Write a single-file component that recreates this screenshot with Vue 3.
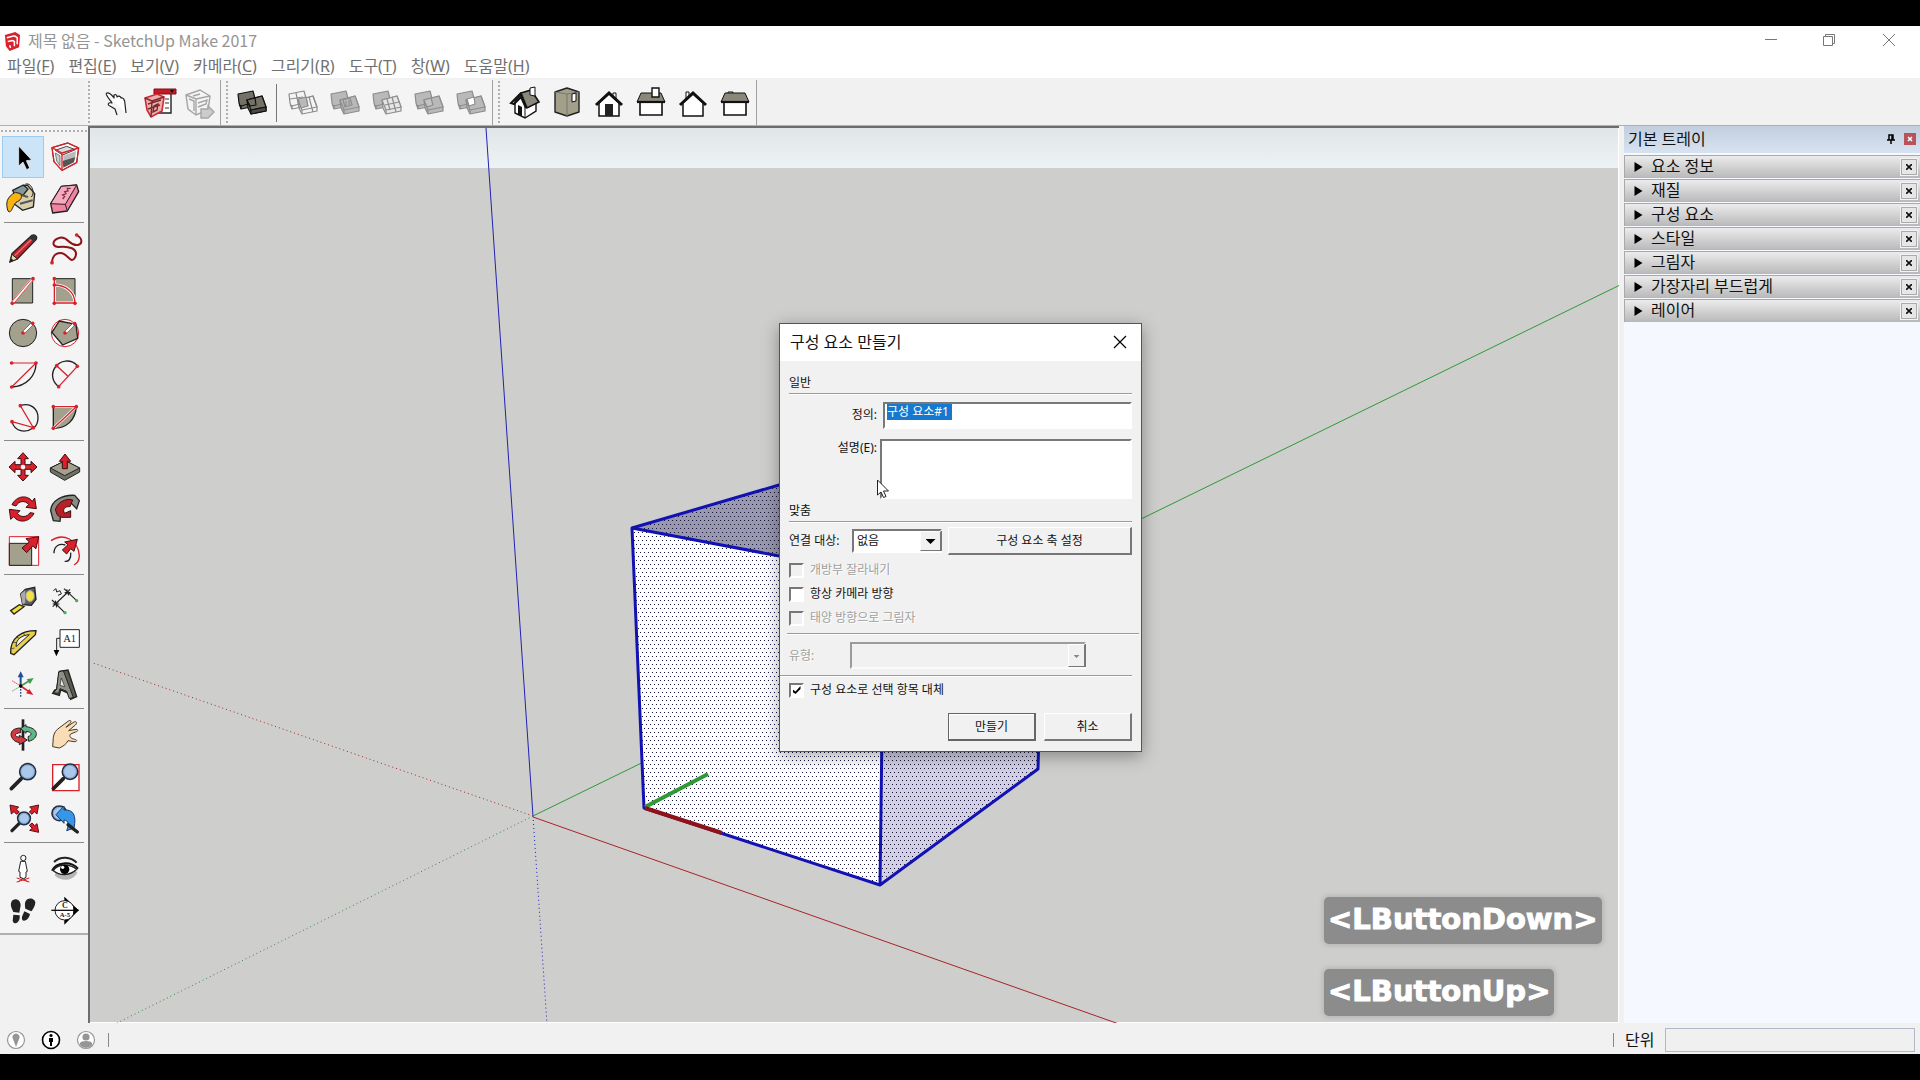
<script setup>
import { ref } from 'vue'

const menus = [
  ['파일', 'F'], ['편집', 'E'], ['보기', 'V'], ['카메라', 'C'],
  ['그리기', 'R'], ['도구', 'T'], ['창', 'W'], ['도움말', 'H'],
]

const panels = ['요소 정보', '재질', '구성 요소', '스타일', '그림자', '가장자리 부드럽게', '레이어']

const definition = ref('구성 요소#1')
const description = ref('')

const solid = (back, front, extra, stroke) => `
  <g stroke="${stroke}" stroke-width="1.2" stroke-linejoin="round">
    <path d="M0 3 15 0 18 11 18 15 3 18 1 12Z" fill="${back}"/>
    <path d="M1 14 3 15 18 11M3 14V18" fill="none"/>
    <path d="M9 9 24 5 28 16 28 20 13 23 10 17Z" fill="${front}"/>
    <path d="M9 9 24 5 28 16 13 19Z" fill="${front}"/>
    <path d="M13 19V23" fill="none"/>${extra}
  </g>`

const G = '#b9b9b9'
const S = '#8d8d8d'

const toolbars = [
  [
    { name: '상호 작용', art: '<path d="M2 3C4 0 8 4 10 7L10 4C12 3 13 4 13 6 15 4 17 6 17 7 19 6 21 9 21 13L22 22M2 3C4 7 6 9 8 12 4 11 3 14 6 15L11 18 13 24" fill="#fff" stroke="#222" stroke-width="1.2" stroke-linejoin="round"/>' },
    { name: '구성 요소 옵션', art: '<path d="M12 2H26V22H12Z" fill="#fff" stroke="#222" stroke-width="1.4"/><path d="M9-2H31V3H9Z" fill="#c41c26" stroke="#7d1018"/><path d="M25-1 29-1 27 2Z" fill="#111"/><path d="M20 8H24M20 12H24M20 17H24" stroke="#333"/><path d="M0 7 12 3 19 6 17 20 6 26 2 19Z" fill="#eab0b0" stroke="#cf2832" stroke-width="1.6"/><path d="M0 7 7 10 6 26M7 10 19 6M3 13 16 9M3 18 15 14M9 15 13 13 12 19 8 21Z" fill="none" stroke="#7c2a2c" stroke-width="1.4"/>' },
    { name: '구성 요소 특성', art: '<g fill="none" stroke="#a5a5a5" stroke-width="1.4"><path d="M0 4 14 -1 24 5 22 19 10 24 2 18Z"/><path d="M0 4 10 8 24 5M10 8V24M3 8 8 10 8 20M12 12 21 9 20 13 12 16M14 3 7 5"/><path d="M15 18H22V15L28 21 22 27H15Z" fill="#ccc"/></g>' },
  ],
  [
    { name: '외부 쉘', art: solid('#747267', '#747267', '<path d="M9 9 17 7 18 14 12 15Z" fill="#747267"/><path d="M13 19 28 16V20L13 23Z" fill="#4c4b44"/>', '#111') },
    { divider: true },
    { name: '교차', art: solid('none', 'none', `<path d="M9 8 17 6 19 15 12 17Z" fill="${G}"/><path d="M7 2 10 16M20 6 24 21M1 8 14 6" fill="none"/>`, S) },
    { name: '결합', art: solid(G, G, '<path d="M12 9 19 7 21 14 14 16ZM15 10V15M18 9V14" fill="none"/>', S) },
    { name: '빼기', art: solid(G, '#e6e6e6', '<path d="M14 8 17 19M19 6 23 21M12 14 26 11" fill="none"/>', S) },
    { name: '자르기', art: solid(G, G, '<path d="M9 9 16 7 18 14 12 16Z" fill="#c4c4c4"/>', S) },
    { name: '분할', art: solid(G, G, '<path d="M10 8 17 6 18 13 12 15Z" fill="#fff"/>', S) },
  ],
  [
    { name: '등각 투영', art: '<path d="M4 10V22L14 27 25 20V13L10 4Z" fill="#fff" stroke="#111" stroke-width="1.4"/><path d="M14 16V27" stroke="#111"/><path d="M7 14 11 16V25L7 23Z" fill="#111"/><path d="M10 2 20-1 28 11 16 17Z" fill="#8a887a" stroke="#111" stroke-width="1.6"/><path d="M10 2 0 12 3 13 10 6 15 17" fill="none" stroke="#111" stroke-width="2"/><path d="M19-3 24-4 24 5 19 4Z" fill="#fff" stroke="#111"/>' },
    { name: '상단', art: '<path d="M2 1 14-3 26 1V21L14 25 2 21Z" fill="#a3a08a" stroke="#222" stroke-width="1.4" stroke-linejoin="round"/><path d="M14 3V25M2 1 14 3 26 1" stroke="#777" fill="none"/><path d="M19 3 23 2V10L19 11Z" fill="#fff" stroke="#111"/>' },
    { name: '정면', art: '<path d="M18 2H21V9H18Z" fill="#fff" stroke="#111"/><path d="M4 12V25H24V12L14 3Z" fill="#fff" stroke="#111" stroke-width="1.5"/><path d="M10 13H18V25H10Z" fill="#222"/><path d="M1 14 14 2 27 14" fill="none" stroke="#111" stroke-width="3"/>' },
    { name: '오른쪽', art: '<path d="M3 11H25V24H3Z" fill="#fff" stroke="#111" stroke-width="1.6"/><path d="M4 2H24L28 11H0Z" fill="#8a887a" stroke="#111"/><path d="M0 11H28" stroke="#111" stroke-width="2.2"/><path d="M15-3H22V6H15Z" fill="#fff" stroke="#111" stroke-width="1.4"/>' },
    { name: '후면', art: '<path d="M7 1H10V9H7Z" fill="#fff" stroke="#111"/><path d="M4 12V25H24V12L14 3Z" fill="#fff" stroke="#111" stroke-width="1.5"/><path d="M1 14 14 2 27 14" fill="none" stroke="#111" stroke-width="3"/>' },
    { name: '왼쪽', art: '<path d="M7 1H12V3H7Z" fill="#fff" stroke="#111"/><path d="M3 11H25V24H3Z" fill="#fff" stroke="#111" stroke-width="1.6"/><path d="M4 2H24L28 11H0Z" fill="#8a887a" stroke="#111"/><path d="M0 11H28" stroke="#111" stroke-width="2.2"/>' },
  ],
]

const R = '#d9202b'
const F = '#a3a18e'
const dots = (...p) => p.map(([x, y]) => `<circle cx="${x}" cy="${y}" r="5.5" fill="${R}"/>`).join('')
const lens = (x, y, r) => `<circle cx="${x}" cy="${y}" r="${r}" fill="#a9c8ea" stroke="#222e42" stroke-width="5"/><circle cx="${x}" cy="${y}" r="${r - 4}" fill="none" stroke="#6f93c6" stroke-width="2"/>`

const toolGroups = [
  [
    { name: '선택', box: '6 33', active: true, art: '<path d="M56 63V123L69 111 80 134 89 129 79 107 95 105Z" fill="#000" stroke="#fff" stroke-width="2"/>' },
    { name: '구성 요소 만들기', box: '132 33', art: `<path d="M156 68 203 54 236 69 230 113 186 136 162 110Z" fill="#fff" stroke="#222" stroke-width="3"/><path d="M166 76 200 64 226 74 188 90Z" fill="#ddd" stroke="#444" stroke-width="3"/><path d="M190 92 228 78 226 96 190 110Z" fill="#bbb"/><path d="M188 108 226 96 222 112 190 128Z" fill="#555"/><path d="M166 84 180 92 180 122 170 108Z" fill="#ccc" stroke="#444" stroke-width="2"/><path d="M156 68 203 54 236 69 230 113 186 136 162 110ZM156 68 186 84 236 69M186 84V136" fill="none" stroke="${R}" stroke-width="4"/>` },
    { name: '페인트통', box: '6 159', art: '<path d="M52 190 82 180 104 206 100 246 68 256 42 236Z" fill="#d7cfac" stroke="#222" stroke-width="4"/><path d="M38 196 70 180 84 192 70 210 46 214Z" fill="#829999" stroke="#222" stroke-width="4"/><path d="M50 206 84 216M60 236 98 226" stroke="#555" stroke-width="6"/><path d="M46 202C20 216 16 234 24 258 34 268 36 246 48 232 62 226 68 218 62 206Z" fill="#f9b30f" stroke="#222" stroke-width="3"/><path d="M70 184C86 160 110 200 94 216" fill="none" stroke="#222" stroke-width="3"/>' },
    { name: '지우개', box: '132 159', art: '<path d="M152 236 184 184 230 180 236 200 202 258 158 264Z" fill="#f2829f" stroke="#222" stroke-width="4" stroke-linejoin="round"/><path d="M152 236 196 238 230 180 184 184Z" fill="#f9a9bd" stroke="#222" stroke-width="3"/><path d="M196 238 202 258" stroke="#222" stroke-width="3"/><path d="M188 222 194 214 188 210 198 206 194 200 204 198 202 190 212 190" fill="none" stroke="#7d3448" stroke-width="4"/>' },
  ],
  [
    { name: '선', box: '6 309', art: '<path d="M30 411 36 386 94 332C104 326 114 334 108 344L52 402Z" fill="#c3242c" stroke="#222" stroke-width="4"/><path d="M44 392 98 340" stroke="#ef6b6b" stroke-width="4"/><path d="M88 338 102 352 109 344C112 334 104 328 96 331Z" fill="#333"/><path d="M30 411 36 388 52 402Z" fill="#e9d8a6" stroke="#222" stroke-width="3"/><path d="M29 412 33 400 41 406Z" fill="#222"/>' },
    { name: '자유형', box: '132 309', art: `<path d="M230 330C248 340 248 356 234 360 206 364 206 334 180 338 156 344 154 364 174 366 206 362 236 370 226 396 212 422 204 384 182 384 164 384 158 394 156 412" fill="none" stroke="#8e1219" stroke-width="6"/>${dots([230, 330], [156, 413])}` },
    { name: '직사각형', box: '6 435', art: `<path d="M37 461H98V534H37Z" fill="${F}" stroke="#222" stroke-width="3"/><path d="M37 534 98 461" stroke="#fff" stroke-width="9"/><path d="M34 532 96 460M41 536 101 463" stroke="${R}" stroke-width="2.4"/>${dots([37, 535], [99, 461])}` },
    { name: '회전된 직사각형', box: '132 435', art: `<path d="M163 461H225V534H163Z" fill="${F}" stroke="#222" stroke-width="3"/><path d="M163 461V534H225C224 500 196 480 163 480" fill="none" stroke="#fff" stroke-width="9"/><path d="M163 461V534H225C224 500 196 480 163 480" fill="none" stroke="${R}" stroke-width="4"/>${dots([163, 461], [163, 480], [163, 535], [225, 535])}` },
    { name: '원', box: '6 561', art: `<circle cx="69" cy="624" r="41" fill="${F}" stroke="#222" stroke-width="3"/><path d="M69 624 98 595" stroke="#fff" stroke-width="9"/><path d="M66 621 95 592M72 627 101 598" stroke="${R}" stroke-width="2.4"/>${dots([69, 624], [98, 595])}` },
    { name: '다각형', box: '132 561', art: `<circle cx="195" cy="624" r="41" fill="#fff" stroke="${R}" stroke-width="3"/><path d="M156 622 178 588 228 598 233 640 188 660Z" fill="${F}" stroke="#222" stroke-width="4"/><path d="M195 624 224 595" stroke="#fff" stroke-width="9"/><path d="M192 621 221 592M198 627 227 598" stroke="${R}" stroke-width="2.4"/>${dots([195, 624], [224, 596])}` },
    { name: '호', box: '6 687', art: `<path d="M108 714C108 752 80 784 35 786" fill="none" stroke="#222" stroke-width="4"/><path d="M35 714H108L35 786" fill="none" stroke="${R}" stroke-width="3.5"/>${dots([35, 714], [108, 714], [35, 786])}` },
    { name: '2점 호', box: '132 687', art: `<path d="M232 722C212 700 180 706 166 726 152 746 156 770 176 785" fill="none" stroke="#222" stroke-width="4"/><path d="M232 724 176 785M170 722 203 753" fill="none" stroke="${R}" stroke-width="4"/>${dots([232, 724], [176, 785], [170, 722])}` },
    { name: '3점 호', box: '6 813', art: `<path d="M61 842C90 832 114 850 114 878 114 896 108 904 100 908 76 926 44 920 36 890" fill="none" stroke="#222" stroke-width="4"/><path d="M61 842 100 908 36 890" fill="none" stroke="${R}" stroke-width="3.5"/>${dots([61, 842], [100, 908], [36, 890])}` },
    { name: '파이', box: '132 813', art: `<path d="M160 845H229C226 886 200 910 160 910Z" fill="${F}" stroke="#222" stroke-width="4"/><path d="M160 845H229L160 910" fill="none" stroke="#fff" stroke-width="8"/><path d="M160 845H229L160 910" fill="none" stroke="${R}" stroke-width="4"/>${dots([160, 845], [229, 845], [160, 910])}` },
  ],
  [
    { name: '이동', box: '6 48', art: `<path d="M69 68 85 86H75V104H93V94L111 111 93 128V118H75V136H85L69 153 53 136H63V118H45V128L27 111 45 94V104H63V86H53Z" fill="${R}" stroke="#3a1012" stroke-width="3"/><circle cx="69" cy="111" r="7" fill="#f3f3f3"/>` },
    { name: '밀기/끌기', box: '132 48', art: `<path d="M151 114 196 92 239 114V126L194 151 151 126Z" fill="#6f7365" stroke="#222" stroke-width="3"/><path d="M151 114 196 92 239 114 194 137Z" fill="${F}" stroke="#222" stroke-width="3"/><path d="M195 72 212 94H202V116H187V94H178Z" fill="${R}" stroke="#3a1012" stroke-width="3"/>` },
    { name: '회전', box: '6 174', art: `<path d="M36 224C50 196 82 194 97 214L104 204 109 236 78 232 86 224C76 210 56 212 48 228Z" fill="${R}" stroke="#3a1012" stroke-width="3"/><path d="M102 250C88 278 56 280 41 260L32 268 28 238 60 242 52 250C62 264 82 262 90 248Z" fill="${R}" stroke="#3a1012" stroke-width="3"/>` },
    { name: '따라가기', box: '132 174', art: `<path d="M152 242C154 212 186 194 224 196L238 212 230 236 214 220C196 220 178 236 182 254L180 274 160 272Z" fill="#8b8d84" stroke="#222" stroke-width="4"/><path d="M166 240C172 218 190 210 206 208L218 210 210 230C194 228 186 240 194 250L212 242 212 262 184 262C168 258 170 246 166 240Z" fill="#b82028" stroke="#3a1012" stroke-width="3"/>` },
    { name: '배율', box: '6 300', art: `<path d="M28 320H116V406H28Z" fill="#fff" stroke="${R}" stroke-width="3"/><path d="M28 340H95V406H28Z" fill="${F}" stroke="#222" stroke-width="3"/><path d="M116 320 108 356 98 348 80 368 66 354 88 336 78 326Z" fill="${R}" stroke="#3a1012" stroke-width="3"/>` },
    { name: '오프셋', box: '132 300', art: `<path d="M153 332C190 306 234 330 238 376 238 390 232 400 222 405" fill="none" stroke="${R}" stroke-width="4"/><path d="M162 370C162 346 180 340 196 345M212 368C214 386 206 396 194 394" fill="none" stroke="#222" stroke-width="4"/><path d="M232 328 222 364 212 356 200 372 187 360 204 344 194 336Z" fill="${R}" stroke="#3a1012" stroke-width="3"/>` },
  ],
  [
    { name: '줄자 도구', box: '6 450', art: '<path d="M32 542 58 524 72 530 42 552Z" fill="#f4df34" stroke="#222" stroke-width="4"/><path d="M62 492 76 478 104 472 108 508 94 526 68 524Z" fill="#5d5d5d" stroke="#222" stroke-width="4"/><path d="M62 492 76 480V518L68 524Z" fill="#aaa"/><ellipse cx="90" cy="498" rx="12" ry="16" fill="#f4e043" stroke="#bbb" stroke-width="3"/>' },
    { name: '치수', box: '132 450', art: '<path d="M166 522 204 486M192 476 230 512M156 510 194 548M196 494 210 478M158 530 176 514M200 478 206 496M166 512 170 532M194 488H212M158 522H178" stroke="#222" stroke-width="3.5"/><circle cx="230" cy="512" r="5" fill="#4bad55"/><circle cx="195" cy="548" r="5" fill="#4bad55"/><path d="M160 482 168 476 170 486 180 482 184 492 174 496" fill="none" stroke="#222" stroke-width="3"/>' },
    { name: '각도기', box: '6 576', art: '<path d="M32 670C30 622 66 602 108 602L106 614 42 674Z" fill="#e6d14e" stroke="#222" stroke-width="4"/><path d="M48 650C48 626 66 616 88 614Z" fill="#f3f3f3" stroke="#222" stroke-width="3"/><path d="M34 656 44 654M38 636 48 638M50 620 58 626M70 608 74 616" stroke="#222" stroke-width="2"/>' },
    { name: '텍스트', box: '132 576', art: '<path d="M180 599H238V652H180Z" fill="#fff" stroke="#222" stroke-width="3"/><path d="M180 625H170V664" fill="none" stroke="#222" stroke-width="3"/><path d="M161 660H178L169 679Z"/><text x="209" y="635" text-anchor="middle" font-family="Liberation Serif, serif" font-size="32" fill="#222">A1</text>' },
    { name: '축', box: '6 702', art: `<path d="M62 768V736" stroke="#234f94" stroke-width="6"/><path d="M62 724 71 742H53Z" fill="#234f94"/><path d="M62 768 86 754" stroke="#3d9a47" stroke-width="5"/><path d="M101 744 90 762 80 748Z" fill="#3d9a47"/><path d="M62 768 86 784" stroke="${R}" stroke-width="5"/><path d="M100 795 78 790 88 777Z" fill="${R}"/><path d="M62 768V802" stroke="#234f94" stroke-width="4" stroke-dasharray="5 4"/><path d="M62 768 36 752" stroke="${R}" stroke-width="3" stroke-dasharray="4 3"/><path d="M62 768 36 784" stroke="#3d9a47" stroke-width="3" stroke-dasharray="4 3"/><circle cx="62" cy="768" r="5"/>` },
    { name: '3D 텍스트', box: '132 702', art: '<path d="M178 724 204 720 230 800 212 808 206 790 182 780 178 796 158 790 164 780 170 778Z" fill="#5a5b53" stroke="#222" stroke-width="4"/><path d="M176 726 190 722 220 802 208 806 200 784 180 776 176 790 160 788 170 778Z" fill="#8f9085" stroke="#222" stroke-width="3"/><path d="M184 744 194 770 180 766Z" fill="#eee" stroke="#222" stroke-width="2"/>' },
  ],
  [
    { name: '궤도', box: '6 42', art: '<path d="M69 58V152" stroke="#222" stroke-width="8"/><path d="M62 84C28 84 26 110 46 124L58 128 58 134 82 120 58 106V112C40 108 42 100 62 98Z" fill="#d63a3f" stroke="#222" stroke-width="3"/><path d="M78 74 62 86 78 100V94C96 96 98 104 84 110L86 124C118 116 118 84 78 80Z" fill="#5fb687" stroke="#222" stroke-width="3"/>' },
    { name: '이동 보기', box: '132 42', art: '<path d="M158 140 160 112C162 98 168 90 180 82L204 64C212 58 216 64 210 70L198 82 222 66C230 62 232 70 226 75L206 92 228 88C236 88 234 95 226 96L212 102C206 108 212 116 224 118 234 120 230 126 222 125L204 122C198 134 190 138 178 144Z" fill="#f8ddb6" stroke="#4b392a" stroke-width="3" stroke-linejoin="round"/>' },
    { name: '확대/축소', box: '6 168', art: `<path d="M34 266 64 236" stroke="#222" stroke-width="11" stroke-linecap="round"/>${lens(83, 215, 24)}` },
    { name: '확대/축소 창', box: '132 168', art: `<path d="M158 194H237V272H158Z" fill="#fff" stroke="${R}" stroke-width="4"/><path d="M160 266 190 236" stroke="#222" stroke-width="11" stroke-linecap="round"/>${lens(210, 215, 23)}` },
    { name: '범위 확대/축소', box: '6 294', art: `<g fill="${R}" stroke="#5a1014" stroke-width="3"><path d="M30 315 56 321 49 328 58 336 50 343 42 335 34 342Z"/><path d="M116 315 111 342 103 335 96 343 88 336 96 328 89 321Z"/><path d="M116 397 89 391 97 385 88 376 96 369 104 377 111 371Z"/></g><path d="M36 392 58 370" stroke="#222" stroke-width="10" stroke-linecap="round"/>${lens(72, 355, 19)}` },
    { name: '이전', box: '132 294', art: `${lens(178, 340, 22)}<path d="M168 344 192 318V330C220 328 230 346 222 384L200 392C208 372 206 362 192 360V370Z" fill="#3896e8" stroke="#173e72" stroke-width="3"/><path d="M204 374 232 396" stroke="#222" stroke-width="10" stroke-linecap="round"/>` },
  ],
  [
    { name: '카메라 배치', box: '6 444', art: '<path d="M54 546 69 534 84 546M50 534 88 546M88 534 50 546" fill="none" stroke="#d9202b" stroke-width="3"/><path d="M62 484 76 484 82 514 78 516V532L71 536 60 532V516L56 514Z" fill="#fff" stroke="#222" stroke-width="3"/><circle cx="70" cy="474" r="8" fill="#fff" stroke="#222" stroke-width="3"/>' },
    { name: '둘러보기', box: '132 444', art: '<path d="M164 526C180 544 216 546 232 518L222 504 170 512Z" fill="#b5b5b5"/><path d="M162 486C182 468 212 470 230 488" fill="none" stroke="#222" stroke-width="6"/><path d="M160 512C174 490 208 490 230 508 210 528 180 528 160 512Z" fill="#fff" stroke="#222" stroke-width="4"/><circle cx="194" cy="508" r="14"/><circle cx="188" cy="502" r="5" fill="#fff"/><path d="M156 512C168 486 212 482 234 506" fill="none" stroke="#111" stroke-width="6"/>' },
    { name: '걷기', box: '6 570', art: '<path d="M34 606C40 592 62 596 62 616L58 638 40 636C36 626 30 618 34 606ZM40 644 59 646C62 668 42 678 38 662ZM82 598C92 592 106 598 106 608 104 622 98 628 94 634L76 626C74 612 74 604 82 598ZM73 634 90 642C86 664 62 670 66 650Z" fill="#222"/>' },
    { name: '단면 평면', box: '132 570', art: '<path d="M193 590 236 631 193 674Z"/><circle cx="194" cy="631" r="29" fill="#fff" stroke="#222" stroke-width="3"/><path d="M154 631H236" stroke="#111" stroke-width="4"/><path d="M220 618 236 631 220 646Z"/><g font-family="Liberation Serif, serif" fill="#222" text-anchor="middle" font-weight="bold"><text x="195" y="625" font-size="24">C</text><text x="195" y="652" font-size="20">A-5</text></g>' },
  ],
]
</script>

<template>
  <div class="app">
    <header class="title-bar">
      <svg class="logo" viewBox="0 0 18 20" aria-hidden="true">
        <path d="M1 3 12 0 17 3 16 16 6 20 2 15Z" fill="#d8232c" />
        <path d="M3 6 11 4 14 6V13M4 10 9 9 11 10V15M6 14 7 17" fill="none" stroke="#fff" stroke-width="1.6" />
      </svg>
      <h1>제목 없음 - SketchUp Make 2017</h1>
      <div class="window-buttons">
        <button type="button" aria-label="최소화"><svg viewBox="0 0 14 14"><path d="M1 6.5H13" /></svg></button>
        <button type="button" aria-label="복원"><svg viewBox="0 0 14 14"><path d="M1.500 3.500H10.500V12.500H1.500ZM3.500 3.500V1.500H12.500V10.500H10.500" /></svg></button>
        <button type="button" aria-label="닫기"><svg viewBox="0 0 14 14"><path d="M1 1 13 13M13 1 1 13" /></svg></button>
      </div>
    </header>

    <nav class="menu-bar">
      <button v-for="[label, key] in menus" :key="key" type="button">{{ label }}(<u>{{ key }}</u>)</button>
    </nav>

    <div class="toolbars">
      <div v-for="(bar, i) in toolbars" :key="i" class="toolbar">
        <template v-for="(tool, j) in bar" :key="j">
          <i v-if="tool.divider" class="divider"></i>
          <button v-else type="button" :aria-label="tool.name">
            <svg viewBox="0 0 28 24" v-html="tool.art"></svg>
          </button>
        </template>
      </div>
    </div>

    <div class="workspace">
      <aside class="dock">
        <div v-for="(group, i) in toolGroups" :key="i" class="tool-group">
          <button v-for="tool in group" :key="tool.box" type="button" :class="{ active: tool.active }" :aria-label="tool.name">
            <svg :viewBox="tool.box + ' 126 126'" v-html="tool.art"></svg>
          </button>
        </div>
      </aside>

      <main class="viewport">
        <svg class="scene" aria-hidden="true">
          <defs>
            <pattern id="stipple" width="4" height="8" patternUnits="userSpaceOnUse">
              <path d="M0 0h1v1h-1zM2 4h1v1h-1z" fill="#14143c" shape-rendering="crispEdges" />
            </pattern>
          </defs>
          <g transform="translate(-90 -128)" fill="none">
            <g stroke-width="1">
              <path d="M486 128 533 816" stroke="#2222b0" />
              <path d="M533 816 547 1024" stroke="#2222b0" stroke-dasharray="1 3" />
              <path d="M533 816 1620 285" stroke="#2f9a35" />
              <path d="M533 816 115 1024" stroke="#41804a" stroke-dasharray="1 3" />
              <path d="M533 817 1119 1024" stroke="#a82428" />
              <path d="M533 816 93 663" stroke="#a82428" stroke-dasharray="1 3" />
            </g>
            <path d="M632 528 779 485 900 450 1046 480 884 576Z" fill="#9a98ac" />
            <path d="M632 528 884 576 880 885 644 808Z" fill="#fff" />
            <path d="M884 576 1046 480 1038 769 880 885Z" fill="#d2d0e2" />
            <path d="M632 528 779 485 900 450 1046 480 1038 769 880 885 644 808Z" fill="url(#stipple)" />
            <g stroke="#1212b4" stroke-width="3" stroke-linejoin="round">
              <path d="M632 528 779 485 900 450 1046 480 1038 769 880 885 644 808Z" />
              <path d="M632 528 884 576 880 885M884 576 1046 480" />
            </g>
            <path d="M645 807 708 774" stroke="#2f9a35" stroke-width="4" />
            <path d="M645 808 722 833" stroke="#8f1219" stroke-width="4" />
          </g>
        </svg>

        <div class="keystrokes">
          <kbd>&lt;LButtonDown&gt;</kbd>
          <kbd>&lt;LButtonUp&gt;</kbd>
        </div>
      </main>

      <aside class="tray">
        <header>
          <h2>기본 트레이</h2>
          <button type="button" class="pin" aria-label="고정"><svg viewBox="0 0 8 10"><path d="M2 6V1H6V6M0 6H8M4 6V10M5 1V6" fill="none" stroke="#000" stroke-width="1.500" /></svg></button>
          <button type="button" class="tray-close" aria-label="닫기"><svg viewBox="0 0 6 6"><path d="M1 1 5 5M5 1 1 5" stroke="#fff" stroke-width="1.500" /></svg></button>
        </header>
        <section v-for="panel in panels" :key="panel" class="panel">
          <svg class="arrow" viewBox="0 0 8 10" aria-hidden="true"><path d="M0 0 8 5 0 10Z" /></svg>
          <h3>{{ panel }}</h3>
          <button type="button" :aria-label="panel + ' 닫기'"><svg viewBox="0 0 6 6"><path d="M0 0 6 6M6 0 0 6" stroke="#111" stroke-width="1.600" /></svg></button>
        </section>
      </aside>
    </div>

    <footer class="status-bar">
      <svg viewBox="0 0 20 20" fill="#959595"><circle cx="10" cy="10" r="8.500" fill="#fff" stroke="#959595" stroke-width="1.200" /><path d="M10 17 7 9A3.500 3.500 0 1 1 13 9Z" /></svg>
      <svg viewBox="0 0 20 20"><circle cx="10" cy="10" r="8.500" fill="#fff" stroke="#000" stroke-width="1.600" /><circle cx="10" cy="5.500" r="1.600" /><path d="M8 8H12V12H11V16H9V12H8Z" /></svg>
      <svg viewBox="0 0 20 20" fill="#959595"><circle cx="10" cy="10" r="8.500" fill="#fff" stroke="#959595" stroke-width="1.200" /><circle cx="10" cy="7" r="3.600" /><path d="M4 15V13Q5 11 10 11T16 13V15Q13 18 10 18T4 15Z" /></svg>
      <i class="bar"></i>
      <i class="bar end"></i>
      <label for="measure">단위</label>
      <input id="measure" type="text" readonly />
    </footer>

    <form class="dialog" role="dialog" aria-labelledby="dialog-title" @submit.prevent>
      <header>
        <h2 id="dialog-title">구성 요소 만들기</h2>
        <button type="button" aria-label="닫기"><svg viewBox="0 0 14 14"><path d="M1 1 13 13M13 1 1 13" stroke="#000" stroke-width="1.200" /></svg></button>
      </header>

      <div class="body">
        <h3>일반</h3>
        <div class="field">
          <label for="definition">정의:</label>
          <div class="text-box">
            <input id="definition" v-model="definition" type="text" />
          </div>
        </div>
        <div class="field tall">
          <label for="description">설명(E):</label>
          <textarea id="description" v-model="description"></textarea>
        </div>

        <h3>맞춤</h3>
        <div class="glue">
          <label for="glue">연결 대상:</label>
          <div class="select">
            <select id="glue"><option>없음</option></select>
            <span class="drop"></span>
          </div>
          <button type="button" class="push">구성 요소 축 설정</button>
        </div>

        <label class="check off"><input type="checkbox" disabled />개방부 잘라내기</label>
        <label class="check"><input type="checkbox" />항상 카메라 방향</label>
        <label class="check off"><input type="checkbox" disabled />태양 방향으로 그림자</label>

        <hr class="wide" />
        <div class="kind">
          <label for="kind">유형:</label>
          <div class="select">
            <select id="kind" disabled></select>
            <span class="drop"></span>
          </div>
        </div>
        <hr class="left" />

        <label class="check"><input type="checkbox" checked />구성 요소로 선택 항목 대체</label>
        <div class="actions">
          <button type="submit" class="push default">만들기</button>
          <button type="button" class="push">취소</button>
        </div>
      </div>

      <svg class="pointer" viewBox="0 0 12 19" aria-hidden="true">
        <path d="M.5 1V16L4 13 6.500 18.500 9 17.500 6.500 12H11.500Z" fill="#fff" stroke="#222" />
      </svg>
    </form>
  </div>
</template>

<style>
body {
  margin: 0;
  background: #000;
}
</style>

<style scoped>
.app {
  position: relative;
  box-sizing: border-box;
  display: flex;
  flex-direction: column;
  min-height: 100vh;
  border: solid #000;
  border-width: 26px 0;
  background: #f1f1f1;
  color: #111;
  font: 16px/20px "Noto Sans", "Noto Sans CJK KR", sans-serif;
}
.app * {
  box-sizing: border-box;
}
h1, h2, h3 {
  margin: 0;
  font-size: inherit;
  font-weight: 400;
}
button {
  padding: 0;
  border: 0;
  background: none;
  color: inherit;
  font: inherit;
}
svg {
  display: block;
  flex: none;
}

.title-bar {
  display: flex;
  align-items: center;
  height: 30px;
  padding-left: 4px;
  background: #fff;
  color: #949494;
}
.logo {
  width: 17px;
  height: 19px;
  margin-right: 7px;
}
.title-bar h1 {
  padding-bottom: 2px;
  font-family: "Noto Sans CJK KR", sans-serif;
}
.window-buttons {
  display: flex;
  margin-left: auto;
}
.window-buttons button {
  display: grid;
  place-items: center;
  width: 58px;
  height: 30px;
  padding-bottom: 2px;
}
.window-buttons button:last-child {
  width: 62px;
}
.window-buttons svg {
  width: 14px;
  height: 14px;
  fill: none;
  stroke: #777;
}

.menu-bar {
  display: flex;
  gap: 14px;
  height: 22px;
  padding-left: 7px;
  background: #fff;
  color: #707070;
}
.menu-bar button {
  height: 20px;
  white-space: nowrap;
}
.menu-bar u {
  text-underline-offset: 2px;
}

.toolbars {
  display: flex;
  height: 48px;
  padding-left: 86px;
  border-bottom: 1px solid #b0b0b0;
}
.toolbar {
  display: flex;
  align-items: center;
  margin-top: 2px;
  padding-left: 10px;
  border-right: 1px solid #a0a0a0;
  background: radial-gradient(circle, #b0b0b0 1px, transparent 1px) 4px 0 / 4px 4px repeat-y #f4f4f4;
}
.toolbar button {
  display: grid;
  place-items: center;
  width: 42px;
  height: 42px;
}
.toolbar:first-child {
  padding-left: 11px;
  background-position: 1px 0;
}
.toolbar:first-child button {
  width: 41px;
}
.toolbar:last-child {
  padding-left: 11px;
}
.toolbar svg {
  width: 28px;
  height: 24px;
  overflow: visible;
}
.divider {
  width: 1px;
  height: 38px;
  margin: 0 5px 0 3px;
  background: #777;
}

.workspace {
  display: flex;
  flex: 1;
}
.dock {
  align-self: flex-start;
  width: 88px;
  padding: 10px 2px 1px;
  border-bottom: 2px solid #b0b0b0;
  background: radial-gradient(circle, #b0b0b0 1px, transparent 1px) 0 3px / 4px 4px repeat-x #f4f4f4;
}
.tool-group {
  display: flex;
  flex-wrap: wrap;
}
.tool-group + .tool-group {
  margin-top: 2px;
  padding-top: 6px;
  background: linear-gradient(#8a8a8a, #8a8a8a) 2px 0 / 80px 1px no-repeat;
}
.dock button {
  width: 42px;
  height: 42px;
}
.dock button.active {
  background: #cce4f7;
  box-shadow: inset 0 0 0 1px #9ccbf1;
}
.dock svg {
  width: 42px;
  height: 42px;
}

.viewport {
  position: relative;
  flex: 1;
  min-width: 0;
  border: solid #6d6d6d;
  border-width: 2px 0 0 2px;
  box-shadow: inset -1px -1px #fff;
  background: linear-gradient(#e0e5e7, #edf3f5) 0 0 / 100% 40px no-repeat #cececc;
}
.scene {
  position: absolute;
  inset: 0;
  width: 100%;
  height: 100%;
}
.keystrokes {
  position: absolute;
  left: calc(100% - 295px);
  bottom: 7px;
  display: flex;
  flex-direction: column;
  align-items: flex-start;
  gap: 25px;
}
kbd {
  height: 47px;
  padding: 0 4px;
  border-radius: 5px;
  background: #8c8c8c;
  box-shadow: 0 0 4px 2px #b8b8b8;
  color: #fff;
  font: 700 29px/45px "DejaVu Sans", sans-serif;
  -webkit-text-stroke: 1px #fff;
}

.tray {
  width: 296px;
  margin-left: 5px;
  background: #f5f8fe;
}
.tray header {
  display: flex;
  align-items: center;
  height: 27px;
  margin-bottom: 2px;
  padding: 0 4px 1px 4px;
  background: linear-gradient(#c2cddd, #d8e3f2);
}
.tray h2 {
  flex: 1;
}
.pin svg {
  width: 8px;
  height: 10px;
  margin-right: 9px;
}
.tray-close {
  display: grid;
  place-items: center;
  width: 12px;
  height: 12px;
  background: #b8535b;
}
.tray-close svg, .panel button svg {
  width: 6px;
  height: 6px;
}
.panel {
  display: flex;
  align-items: center;
  height: 23px;
  margin-bottom: 1px;
  padding: 0 3px 1px 9px;
  border: solid #a9a9a9;
  border-width: 1px 0 0 1px;
  background: linear-gradient(#ececec, #b8b8b8);
}
.panel h3 {
  flex: 1;
  margin-left: 8px;
  padding-bottom: 2px;
}
.arrow {
  width: 9px;
  height: 10px;
}
.panel button {
  display: grid;
  place-items: center;
  width: 16px;
  height: 16px;
  border: 1px solid #aaa;
  background: #e6e6e6;
  box-shadow: 0 0 0 1px #f4f4f4;
}

.status-bar {
  display: flex;
  align-items: center;
  height: 31px;
  padding: 2px 5px 0 6px;
}
.status-bar svg {
  width: 20px;
  height: 20px;
  margin-right: 15px;
}
.bar {
  width: 1px;
  height: 14px;
  margin-left: -3px;
  background: #888;
}
.bar.end {
  margin: 0 11px 0 auto;
}
.status-bar label {
  width: 40px;
}
.status-bar input {
  width: 250px;
  height: 24px;
  border: 1px solid #b1b8c8;
  background: #f0f0f0;
}

.dialog {
  position: absolute;
  left: 779px;
  top: 297px;
  width: 363px;
  border: 1px solid #555;
  background: #f1f1f1;
  box-shadow: 0 4px 16px rgba(0, 0, 0, .35);
  font: 12px/16px "Noto Sans", "Noto Sans CJK KR", sans-serif;
}
.dialog header {
  display: flex;
  align-items: center;
  justify-content: space-between;
  height: 37px;
  padding: 0 14px 2px 10px;
  background: #fff;
  font-size: 16px;
}
.dialog header svg {
  width: 14px;
  height: 14px;
}
.body {
  padding: 14px 9px 10px;
}
.body h3 {
  margin-bottom: 8px;
  padding-bottom: 2px;
  border-bottom: 1px solid #9b9b9b;
  box-shadow: 0 1px #fff;
}
.field {
  display: flex;
  justify-content: flex-end;
  gap: 6px;
  margin-bottom: 10px;
}
.field label {
  padding-top: 5px;
}
.text-box {
  width: 249px;
  height: 27px;
  padding: 0 2px;
  border: 2px solid;
  border-color: #787878 #fff #fff #787878;
  background: #fff;
}
.text-box input {
  display: block;
  width: 65px;
  height: 16px;
  padding: 0;
  border: 0;
  background: #1678cf;
  color: #fff;
  font: 12px/16px "Noto Sans", "Noto Sans CJK KR", sans-serif;
}
.field.tall {
  gap: 3px;
  margin-bottom: 4px;
}
.tall label {
  padding-top: 1px;
}
textarea {
  width: 252px;
  height: 60px;
  border: 2px solid;
  border-color: #787878 #fff #fff #787878;
  background: #fff;
  resize: none;
}
.glue, .kind {
  display: flex;
  align-items: center;
}
.glue {
  margin-top: -3px;
}
.glue label {
  width: 63px;
}
.select {
  position: relative;
  width: 90px;
  height: 24px;
}
select {
  width: 100%;
  height: 100%;
  padding: 0 3px;
  border: 2px solid;
  border-color: #787878 #fff #fff #787878;
  border-radius: 0;
  background: #fff;
  color: #111;
  font: inherit;
  appearance: none;
}
.drop {
  position: absolute;
  top: 2px;
  right: 1px;
  bottom: 2px;
  width: 21px;
  border: 1px solid;
  border-color: #fff #777 #777 #fff;
  box-shadow: 1px 0 #777;
  background: #f1f1f1;
  pointer-events: none;
}
.drop::after {
  content: "";
  display: block;
  width: 10px;
  height: 5px;
  margin: 7px auto 0;
  background: #000;
  clip-path: polygon(0 0, 100% 0, 50% 100%);
}
.push {
  width: 88px;
  height: 28px;
  border: solid;
  border-width: 1px 2px 2px 1px;
  border-color: #fff #777 #777 #fff;
  background: #f1f1f1;
}
.glue .push {
  width: 184px;
  margin-left: 6px;
}
.push.default {
  border-color: #666;
  box-shadow: inset 1px 1px #fff;
}
.check {
  display: flex;
  align-items: center;
  height: 24px;
}
.glue + .check {
  margin-top: 3px;
}
.check input {
  display: grid;
  place-items: center;
  width: 15px;
  height: 15px;
  margin: 0 6px 0 0;
  border: 2px solid;
  border-color: #787878 #fff #fff #787878;
  background: #fff;
  appearance: none;
}
.check input:checked::after {
  content: "";
  width: 8px;
  height: 8px;
  background: #000;
  clip-path: polygon(0 40%, 38% 70%, 100% 0, 100% 38%, 38% 100%, 0 75%);
}
.off, .kind label {
  color: #a0a0a0;
  text-shadow: 1px 1px #fff;
}
.check.off input {
  background: #f1f1f1;
}
hr {
  height: 2px;
  margin: 3px 0 7px;
  border: solid #9b9b9b;
  border-width: 1px 0 0;
  background: #fff;
}
hr.wide {
  margin-left: -2px;
  margin-right: -7px;
}
hr.left {
  margin: 6px 0 1px -9px;
}
.kind label {
  width: 61px;
}
.kind .select {
  width: 236px;
  height: 27px;
}
.kind select {
  background: #f1f1f1;
}
.kind .drop {
  width: 17px;
}
.kind .drop::after {
  width: 6px;
  height: 3px;
  margin-top: 10px;
  background: #888;
}
.actions {
  display: flex;
  justify-content: flex-end;
  gap: 8px;
  margin-top: 11px;
}
.pointer {
  position: absolute;
  left: 97px;
  top: 155px;
  width: 12px;
  height: 19px;
}
</style>
